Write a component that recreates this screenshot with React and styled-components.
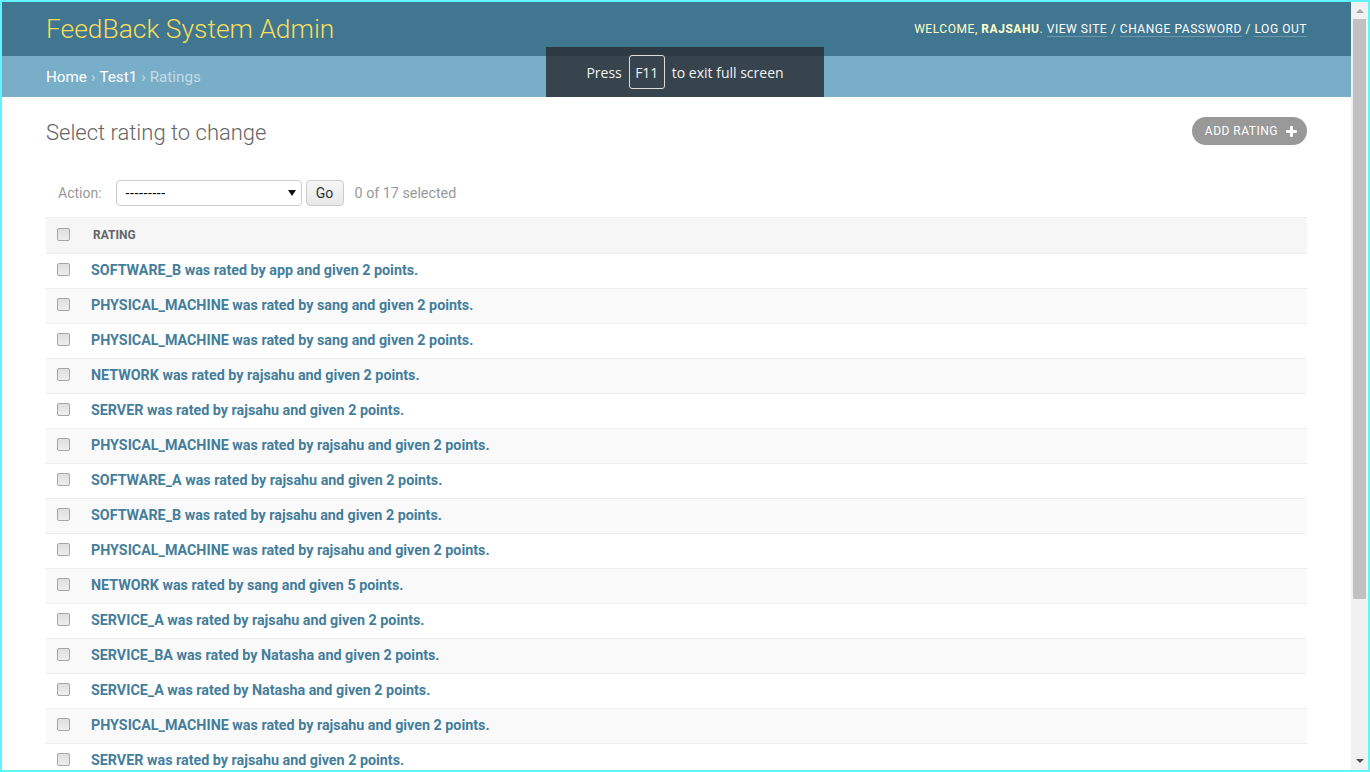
import React from "react";
import styled, { createGlobalStyle } from "styled-components";

const GlobalStyle = createGlobalStyle`
  html, body {
    margin: 0;
    padding: 0;
    overflow: hidden;
    background: #fff;
  }
  * {
    box-sizing: border-box;
  }
`;

const Screen = styled.div`
  position: relative;
  width: 1370px;
  height: 772px;
  border: 2px solid #62f4f8;
  display: flex;
  font-family: Roboto, "Lucida Grande", "DejaVu Sans", Verdana, sans-serif;
  color: #333;
`;

const Page = styled.div`
  flex: 1;
  min-width: 0;
  overflow: hidden;
`;

// scrollbar drawn by hand, the headless browser hides the real one
const ScrollBar = styled.div`
  width: 17px;
  flex-shrink: 0;
  background: #f1f1f1;
  display: flex;
  flex-direction: column;
`;

const ScrollButton = styled.div`
  height: 17px;
  display: flex;
  justify-content: center;
  align-items: ${(p) => (p.$down ? "flex-start" : "flex-end")};
  padding: ${(p) => (p.$down ? "6px 0 0 0" : "0 0 6px 0")};
`;

const Thumb = styled.div`
  height: 580px;
  margin: 0 2px;
  background: #c1c1c1;
`;

const ScrollSpace = styled.div`
  flex: 1;
`;

const Header = styled.header`
  height: 54px;
  background: #417690;
  padding: 0 44px;
  display: flex;
  align-items: center;
  justify-content: space-between;
`;

const Branding = styled.h1`
  margin: 0 0 1px;
  font-size: 26.4px;
  font-weight: 300;
  color: #f5dd5d;
`;

const UserTools = styled.div`
  font-size: 12px;
  letter-spacing: 0.55px;
  text-transform: uppercase;
  color: #ffc;

  strong {
    font-weight: 700;
  }
`;

const ToolLink = styled.a`
  color: #fff;
  text-decoration: none;
  border-bottom: 1px solid rgba(255, 255, 255, 0.25);
`;

const Breadcrumbs = styled.nav`
  height: 41px;
  background: #79aec8;
  padding: 0 44px;
  display: flex;
  align-items: center;
  font-size: 15.2px;
  color: #c4dce8;
`;

const Crumb = styled.a`
  color: #fff;
  text-decoration: none;
`;

const Sep = styled.span`
  margin: 0 4px;
`;

const Content = styled.main`
  padding: 20px 44px 90px;
`;

const ContentHead = styled.div`
  display: flex;
  align-items: center;
  justify-content: space-between;
  height: 28px;
`;

const Title = styled.h1`
  margin: 2px 0 0;
  font-size: 22px;
  font-weight: 300;
  color: #666;
`;

const AddButton = styled.a`
  display: flex;
  align-items: center;
  gap: 8px;
  height: 28px;
  padding: 0 10px 0 13px;
  border-radius: 15px;
  background: #999;
  color: #fff;
  font-size: 12px;
  letter-spacing: 0.5px;
  text-transform: uppercase;
  text-decoration: none;
`;

const Actions = styled.div`
  margin-top: 35px;
  padding-left: 12px;
  height: 26px;
  display: flex;
  align-items: center;
  font-size: 14px;
  color: #999;
`;

const ActionLabel = styled.label`
  margin-right: 14px;
`;

const SelectBox = styled.div`
  width: 186px;
  height: 26px;
  border: 1px solid #ccc;
  border-radius: 4px;
  display: flex;
  align-items: center;
  justify-content: space-between;
  padding: 0 5px 0 9px;
  font-size: 14px;
  letter-spacing: 0.6px;
  color: #000;
  background: #fff;
`;

const GoButton = styled.button`
  margin-left: 4px;
  height: 26px;
  width: 38px;
  border: 1px solid #ccc;
  border-radius: 4px;
  background: linear-gradient(#f6f6f6, #e8e8e8);
  font-family: inherit;
  font-size: 14px;
  color: #333;
  padding: 0;
`;

const Counter = styled.span`
  margin-left: 11px;
  font-size: 14.3px;
  padding-bottom: 1px;
`;

const Table = styled.div`
  margin-top: 11px;
  border-top: 1px solid #eee;
`;

const HeadRow = styled.div`
  display: grid;
  grid-template-columns: 37px 1fr;
  height: 36px;
  background: #f6f6f6;
  border-bottom: 1px solid #eee;
`;

const Row = styled.div`
  display: grid;
  grid-template-columns: 37px 1fr;
  height: 35px;
  background: ${(p) => (p.$alt ? "#f9f9f9" : "#fff")};
  border-bottom: 1px solid #eee;
`;

const CheckCell = styled.div`
  padding: ${(p) => (p.$head ? "10px" : "9px")} 0 0 11px;
`;

const Checkbox = styled.span`
  display: block;
  width: 13px;
  height: 13px;
  border: 1px solid #a6a6a6;
  border-radius: 2px;
  background: linear-gradient(#dedede, #eeeeee);
`;

const HeadCell = styled.div`
  padding: 0 0 1px 10px;
  display: flex;
  align-items: center;
  font-size: 12px;
  font-weight: 700;
  text-transform: uppercase;
  color: #666;
`;

const LinkCell = styled.div`
  padding: 0 0 2px 8px;
  display: flex;
  align-items: center;
`;

const RowLink = styled.a`
  color: #447e9b;
  font-size: 14.3px;
  font-weight: 700;
  text-decoration: none;
`;

const Paginator = styled.p`
  margin: 0;
  height: 36px;
  display: flex;
  align-items: center;
  font-size: 14px;
  color: #666;
  border-bottom: 1px solid #eee;
`;

const FullscreenToast = styled.div`
  position: absolute;
  top: 45px;
  left: 50%;
  transform: translateX(-50%);
  width: 278px;
  height: 50px;
  background: rgba(42, 46, 52, 0.83);
  display: flex;
  align-items: center;
  justify-content: center;
  gap: 7px;
  font-family: "Open Sans", "Noto Sans", sans-serif;
  font-size: 14px;
  color: #f2f2f2;
`;

const Key = styled.span`
  display: inline-flex;
  align-items: center;
  justify-content: center;
  width: 36px;
  height: 34px;
  border: 1px solid #dcdcdc;
  border-radius: 3px;
`;

const ratings = [
  ["SOFTWARE_B", "app", 2],
  ["PHYSICAL_MACHINE", "sang", 2],
  ["PHYSICAL_MACHINE", "sang", 2],
  ["NETWORK", "rajsahu", 2],
  ["SERVER", "rajsahu", 2],
  ["PHYSICAL_MACHINE", "rajsahu", 2],
  ["SOFTWARE_A", "rajsahu", 2],
  ["SOFTWARE_B", "rajsahu", 2],
  ["PHYSICAL_MACHINE", "rajsahu", 2],
  ["NETWORK", "sang", 5],
  ["SERVICE_A", "rajsahu", 2],
  ["SERVICE_BA", "Natasha", 2],
  ["SERVICE_A", "Natasha", 2],
  ["PHYSICAL_MACHINE", "rajsahu", 2],
  ["SERVER", "rajsahu", 2],
  ["SERVICE_B", "sang", 2],
  ["NETWORK", "Natasha", 2],
];

const PlusIcon = () => (
  <svg width="11" height="11" viewBox="0 0 11 11">
    <rect x="4" y="0" width="3" height="11" rx="1" fill="#fff" />
    <rect x="0" y="4" width="11" height="3" rx="1" fill="#fff" />
  </svg>
);

const Caret = () => (
  <svg width="8" height="6" viewBox="0 0 8 6">
    <path d="M0 0 L8 0 L4 6 Z" fill="#111" />
  </svg>
);

const Arrow = ({ down, color }) => (
  <svg width="8" height="4" viewBox="0 0 8 4">
    <path d={down ? "M0 0 L8 0 L4 4 Z" : "M0 4 L8 4 L4 0 Z"} fill={color} />
  </svg>
);

export default function App() {
  return (
    <Screen>
      <GlobalStyle />
      <Page>
        <Header>
          <Branding>FeedBack System Admin</Branding>
          <UserTools>
            Welcome, <strong>rajsahu</strong>. <ToolLink href="#">View site</ToolLink> /{" "}
            <ToolLink href="#">Change password</ToolLink> / <ToolLink href="#">Log out</ToolLink>
          </UserTools>
        </Header>
        <Breadcrumbs>
          <Crumb href="#">Home</Crumb>
          <Sep>›</Sep>
          <Crumb href="#">Test1</Crumb>
          <Sep>›</Sep>
          Ratings
        </Breadcrumbs>
        <Content>
          <ContentHead>
            <Title>Select rating to change</Title>
            <AddButton href="#">
              Add rating
              <PlusIcon />
            </AddButton>
          </ContentHead>
          <Actions>
            <ActionLabel>Action:</ActionLabel>
            <SelectBox>
              <span>---------</span>
              <Caret />
            </SelectBox>
            <GoButton>Go</GoButton>
            <Counter>0 of 17 selected</Counter>
          </Actions>
          <Table>
            <HeadRow>
              <CheckCell $head>
                <Checkbox />
              </CheckCell>
              <HeadCell>Rating</HeadCell>
            </HeadRow>
            {ratings.map(([item, user, points], i) => (
              <Row key={i} $alt={i % 2 === 1}>
                <CheckCell>
                  <Checkbox />
                </CheckCell>
                <LinkCell>
                  <RowLink href="#">
                    {item} was rated by {user} and given {points} points.
                  </RowLink>
                </LinkCell>
              </Row>
            ))}
          </Table>
          <Paginator>17 ratings</Paginator>
        </Content>
      </Page>
      <ScrollBar>
        <ScrollButton>
          <Arrow color="#a3a3a3" />
        </ScrollButton>
        <Thumb />
        <ScrollSpace />
        <ScrollButton $down>
          <Arrow down color="#505050" />
        </ScrollButton>
      </ScrollBar>
      <FullscreenToast>
        Press <Key>F11</Key> to exit full screen
      </FullscreenToast>
    </Screen>
  );
}
